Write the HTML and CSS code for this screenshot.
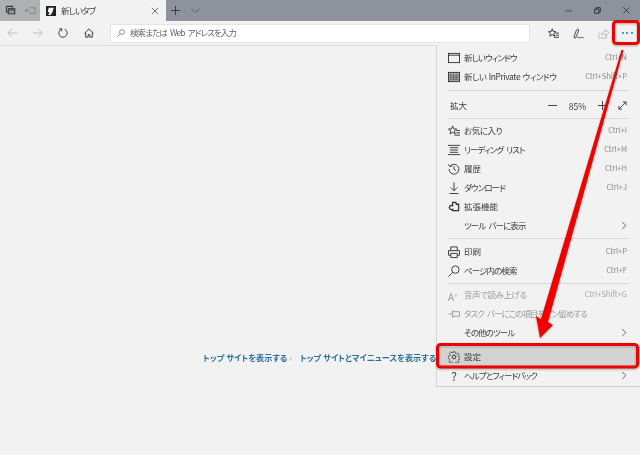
FILE: index.html
```html
<!DOCTYPE html>
<html lang="ja">
<head>
    <meta charset="UTF-8">
    <title>新しいタブ</title>
    <link rel="stylesheet" href="styles.css">
</head>
<body>
<div class="window">
    <!-- Title bar -->
    <div class="titlebar">
        <div class="tab-tools">
            <svg class="ico" viewBox="0 0 16 16"><path d="M2 2h9v2M2 2v8h2" fill="none" stroke="#333" stroke-width="1.5"/><rect x="4.500" y="5" width="10" height="8" fill="#555" stroke="#333"/><rect x="6" y="8" width="7" height="4" fill="#999"/></svg>
            <svg class="ico" viewBox="0 0 16 16"><path d="M6 4h9v8H6M6 8H0M3 5.500L.5 8 3 10.500" fill="none" stroke="#777" stroke-width="1"/></svg>
        </div>
        <div class="tab">
            <svg class="favicon" viewBox="0 0 11 11"><rect width="11" height="11" fill="#222"/><path d="M3 2h5.500L7 7 5 10H2.500L4 7 2 6.500z" fill="#fff"/></svg>
            <span class="tab-title">新しいタブ</span>
            <svg class="tab-close" viewBox="0 0 9 9"><path d="M1 1l7 7M8 1L1 8" stroke="#666" fill="none"/></svg>
        </div>
        <div class="tab-actions">
            <svg class="ico" viewBox="0 0 12 12"><path d="M6 0v12M0 6h12" stroke="#222" fill="none"/></svg>
            <svg class="ico" viewBox="0 0 12 12"><path d="M1 3.500l5 5 5-5" stroke="#4c5058" fill="none"/></svg>
        </div>
        <div class="win-buttons">
            <svg class="ico" viewBox="0 0 10 10"><path d="M0 5.500h10" stroke="#333" fill="none"/></svg>
            <svg class="ico" viewBox="0 0 10 10"><path d="M1 3h6v6H1zM3 3V1h6v6H7" stroke="#222" stroke-width="1.200" fill="none"/></svg>
            <svg class="ico" viewBox="0 0 10 10"><path d="M.5.500l9 9M9.500.500l-9 9" stroke="#222" fill="none"/></svg>
        </div>
    </div>

    <!-- Address bar -->
    <div class="toolbar">
        <div class="nav-buttons">
            <svg class="ico nav" viewBox="0 0 12 12"><path d="M12 6H1M6 1L1 6l5 5" stroke="#b5b5b5" fill="none"/></svg>
            <svg class="ico nav" viewBox="0 0 12 12"><path d="M0 6h11M6 1l5 5-5 5" stroke="#b5b5b5" fill="none"/></svg>
            <svg class="ico nav" viewBox="0 0 12 12"><path d="M4 1.500A5 5 0 1 0 8 1.500" stroke="#222" fill="none"/><path d="M1.500 1h3v3" stroke="#222" fill="none"/></svg>
            <svg class="ico nav" viewBox="0 0 12 12"><path d="M.5 6.500L6 1l5.500 5.500M2 5.500V11h3V8h2v3h3V5.500" stroke="#222" fill="none"/></svg>
        </div>
        <div class="address">
            <svg class="ico-small" viewBox="0 0 10 10"><circle cx="6.200" cy="3.800" r="3" stroke="#777" fill="none"/><path d="M4 6L.5 9.500" stroke="#777" fill="none"/></svg>
            <span class="address-text">検索または Web アドレスを入力</span>
        </div>
        <div class="tool-buttons">
            <svg class="ico" viewBox="0 0 13 13"><path d="M5 1l1.200 3.200 3.300.2-2.600 2 .9 3.300L5 7.900 2.200 9.700l.9-3.300-2.600-2 3.300-.2z" stroke="#222" fill="none"/><path d="M9 6h4M9 8.500h4M7 11h6" stroke="#222" fill="none"/></svg>
            <svg class="ico" viewBox="0 0 13 13"><path d="M1 11L4 2.500 6 1l.5 2.500L3 12zM5 11c2-1 2 1 3.500.5S10 11 12.500 11.500" stroke="#333" fill="none"/></svg>
            <svg class="ico" viewBox="0 0 13 13"><path d="M1 5v7h9V8M4 8c0-3 3-4 5-4V2l4 3.500L9 9V7C7 7 5 7 4 8z" stroke="#b5b5b5" fill="none"/></svg>
            <div class="more-button"><i></i><i></i><i></i></div>
        </div>
    </div>

    <!-- New tab page -->
    <div class="content">
        <div class="top-links">
            <a>トップ サイトを表示する<span class="link-arrow">›</span></a>
            <a>トップ サイトとマイニュースを表示する<span class="link-arrow">›</span></a>
        </div>
    </div>

    <!-- Settings menu -->
    <div class="menu">
        <div class="row"><svg class="ico" viewBox="0 0 13 13"><rect x=".5" y="1.500" width="12" height="10" fill="none" stroke="#333"/><path d="M0 3.500h13" stroke="#333"/></svg><span class="label tight">新しいウィンドウ</span><span class="key">Ctrl+N</span></div>
        <div class="row"><svg class="ico" viewBox="0 0 13 13"><rect x=".5" y="1.500" width="12" height="10" fill="#aaa" stroke="#333"/><path d="M2 5h9M2 7h9M2 9h9M3 3v7M6 3v7M9 3v7" stroke="#444" stroke-dasharray="1 1"/></svg><span class="label mixed">新しい InPrivate ウィンドウ</span><span class="key">Ctrl+Shift+P</span></div>
        <div class="sep sep-a"></div>
        <div class="row"><span class="label zoom-label">拡大</span>
            <span class="zoom-controls">
                <svg class="ico" viewBox="0 0 10 10"><path d="M0 5h10" stroke="#333"/></svg>
                <span>85%</span>
                <svg class="ico" viewBox="0 0 10 10"><path d="M0 5h10M5 0v10" stroke="#333"/></svg>
                <svg class="ico" viewBox="0 0 10 10"><path d="M1 9l8-8M5.500 1H9v3.500M1 5.500V9h3.500" stroke="#333" fill="none"/></svg>
            </span>
        </div>
        <div class="sep sep-b"></div>
        <div class="row"><svg class="ico" viewBox="0 0 13 13"><path d="M5 1l1.200 3.200 3.300.2-2.600 2 .9 3.300L5 7.900 2.200 9.700l.9-3.300-2.600-2 3.300-.2z" stroke="#333" fill="none"/><path d="M9 6h4M9 8.500h4M7 11h6" stroke="#333"/></svg><span class="label mixed">お気に入り</span><span class="key">Ctrl+I</span></div>
        <div class="row"><svg class="ico" viewBox="0 0 13 13"><path d="M0 1.500h13M2 4h9M2 6.500h9M2 9h9M0 11.500h13" stroke="#333" fill="none"/></svg><span class="label tight">リーディング リスト</span><span class="key">Ctrl+M</span></div>
        <div class="row"><svg class="ico" viewBox="0 0 13 13"><path d="M2.300 3.500A5.300 5.300 0 1 1 1.200 6.500M.5 1.500l1.500 2.300 2.500-.5M6.500 3.500v3.300l2.200 1.500" stroke="#333" fill="none"/></svg><span class="label">履歴</span><span class="key">Ctrl+H</span></div>
        <div class="row"><svg class="ico" viewBox="0 0 13 13"><path d="M6.500 .5v9M3 6l3.500 3.500L10 6M1.500 12.500h10" stroke="#333" fill="none"/></svg><span class="label tight">ダウンロード</span><span class="key">Ctrl+J</span></div>
        <div class="row"><svg class="ico" viewBox="0 0 13 13"><path d="M5 1.500h3.500l.5 2h2.500v7H5V9C3 10 1.500 8.500 1.500 7S3 4.500 5 5z" stroke="#333" stroke-width="1.400" fill="none"/></svg><span class="label">拡張機能</span></div>
        <div class="row"><span class="ico"></span><span class="label tight">ツール バーに表示</span><svg class="chevron" viewBox="0 0 6 10"><path d="M1 1l4 4-4 4" stroke="#555" fill="none"/></svg></div>
        <div class="sep sep-c"></div>
        <div class="row"><svg class="ico" viewBox="0 0 13 13"><path d="M3 5V1h7v4M3 10H.5V5h12v5H10M3 8h7v4.500H3z" stroke="#333" fill="none"/></svg><span class="label">印刷</span><span class="key">Ctrl+P</span></div>
        <div class="row"><svg class="ico" viewBox="0 0 13 13"><circle cx="8" cy="5" r="4" stroke="#333" fill="none"/><path d="M5 8l-4.500 4.500" stroke="#333"/></svg><span class="label tight">ページ内の検索</span><span class="key">Ctrl+F</span></div>
        <div class="sep sep-d"></div>
        <div class="row disabled"><span class="ico read-icon">A<sup>୬</sup></span><span class="label mixed">音声で読み上げる</span><span class="key">Ctrl+Shift+G</span></div>
        <div class="row disabled"><svg class="ico" viewBox="0 0 13 13"><path d="M5 4h7.500v5H5M5 2.500v8M5 6.500H.5" stroke="#999" fill="none"/></svg><span class="label tight">タスク バーにこの項目をピン留めする</span></div>
        <div class="row"><span class="ico"></span><span class="label tight">その他のツール</span><svg class="chevron" viewBox="0 0 6 10"><path d="M1 1l4 4-4 4" stroke="#555" fill="none"/></svg></div>
        <div class="row row-settings"><svg class="ico" viewBox="0 0 13 13"><circle cx="6.500" cy="6.500" r="2" stroke="#333" fill="none"/><path d="M5.500.8h2l.3 1.700 1.300.6 1.500-1 1.400 1.400-1 1.500.6 1.300 1.700.3v2l-1.700.3-.6 1.300 1 1.500-1.400 1.400-1.500-1-1.300.6-.3 1.700h-2l-.3-1.700-1.300-.6-1.500 1-1.400-1.400 1-1.500-.6-1.300L.2 7.500v-2l1.700-.3.600-1.300-1-1.500 1.400-1.400 1.500 1 1.300-.6z" stroke="#333" stroke-width=".8" fill="none"/></svg><span class="label">設定</span></div>
        <div class="row"><span class="ico help-icon">?</span><span class="label tight">ヘルプとフィードバック</span><svg class="chevron" viewBox="0 0 6 10"><path d="M1 1l4 4-4 4" stroke="#555" fill="none"/></svg></div>
    </div>

    <!-- Red annotations drawn over the screenshot -->
    <svg class="annotations" viewBox="0 0 640 455">
        <rect x="613.500" y="21.500" width="25" height="22" rx="3" fill="none" stroke="#f00000" stroke-width="3"/>
        <rect x="437.500" y="344.500" width="200" height="22.500" rx="3" fill="none" stroke="#f00000" stroke-width="3"/>
        <path d="M621.500 50L623.500 50 548 322 553 325 540 338 536 316 541 319z" fill="#f00000"/>
    </svg>
</div>
</body>
</html>
```

FILE: styles.css
```css
html, body {
    margin: 0;
    padding: 0;
}

body {
    font-family: "Noto Sans CJK JP", "Noto Sans", sans-serif;
    font-size: 8.5px;
    font-feature-settings: "palt";
    color: #3c3c3c;
    background-color: #f2f2f2;
}

.window {
    position: relative;
    width: 640px;
    height: 455px;
    overflow: hidden;
    display: flex;
    flex-direction: column;
    filter: blur(0.4px);
}

.ico {
    width: 12px;
    height: 12px;
    flex: none;
}

/* Title bar */
.titlebar {
    display: flex;
    align-items: center;
    height: 21px;
    background-color: #8d929c;
}

.tab-tools {
    display: flex;
    align-items: center;
    gap: 9px;
    width: 40px;
    height: 100%;
    box-sizing: border-box;
    padding-left: 5px;
    background-color: #aeb0b3;
}

.tab-tools .ico {
    width: 11px;
    height: 11px;
}

.tab {
    display: flex;
    align-items: center;
    width: 126px;
    height: 100%;
    box-sizing: border-box;
    padding: 0 7px 0 6px;
    background-color: #f2f2f2;
}

.favicon {
    width: 10px;
    height: 10px;
    margin-right: 5px;
}

.tab-title {
    flex: 1;
    margin-bottom: 2px;
    letter-spacing: -0.9px;
}

.tab-close {
    width: 8px;
    height: 8px;
}

.tab-actions {
    display: flex;
    align-items: center;
    gap: 11px;
    margin-left: 5px;
}

.tab-actions .ico {
    width: 9px;
    height: 9px;
}

.win-buttons {
    display: flex;
    align-items: center;
    gap: 22px;
    margin-left: auto;
    padding-right: 10px;
}

.win-buttons .ico {
    width: 7px;
    height: 7px;
}

/* Address bar */
.toolbar {
    display: flex;
    align-items: center;
    height: 24px;
    background-color: #f2f2f2;
    border-bottom: 1px solid #dcdcdc;
}

.nav-buttons {
    display: flex;
    align-items: center;
    gap: 15.5px;
    width: 110px;
    box-sizing: border-box;
    padding-left: 7px;
}

.nav-buttons .nav {
    width: 10px;
    height: 10px;
}

.address {
    display: flex;
    align-items: center;
    gap: 5px;
    width: 420px;
    height: 19px;
    box-sizing: border-box;
    padding-left: 6px;
    background-color: #fff;
    border: 1px solid #e4e4e4;
    color: #666;
}

.address-text {
    margin-bottom: 2px;
    letter-spacing: -0.9px;
    word-spacing: 2px;
}

.ico-small {
    width: 8px;
    height: 8px;
}

.tool-buttons {
    display: flex;
    align-items: center;
    gap: 14px;
    margin-left: 18px;
}

.tool-buttons .ico {
    width: 11px;
    height: 11px;
}

.more-button {
    display: flex;
    justify-content: center;
    align-items: center;
    gap: 2.5px;
    width: 22px;
    height: 20px;
    margin-left: -7px;
}

.more-button i {
    width: 2px;
    height: 2px;
    border-radius: 50%;
    background-color: #1a78c8;
}

/* New tab page */
.content {
    flex: 1;
    background-color: #f2f2f2;
}

.top-links {
    display: flex;
    gap: 8px;
    padding: 306px 0 0 203px;
}

.top-links a {
    color: #2b6f9f;
    font-size: 8.2px;
    font-weight: 700;
    line-height: 11px;
    white-space: nowrap;
}

.link-arrow {
    margin-left: 2px;
    color: #999;
    font-weight: 400;
}

/* Settings menu */
.menu {
    position: absolute;
    top: 45px;
    left: 436px;
    width: 204px;
    height: 342px;
    box-sizing: border-box;
    padding: 3px 0 0;
    background-color: #f2f2f2;
    border: 1px solid #d6d6d6;
    border-top: 0;
    border-right: 0;
    border-bottom: 1px solid #d0d0d0;
}

.row {
    display: flex;
    align-items: center;
    height: 19px;
    padding: 0 13px 0 11px;
    white-space: nowrap;
    box-sizing: border-box;
}

.label {
    margin-left: 4px;
    margin-bottom: 2px;
    flex: 1;
}

/* kana set in this font runs wider than in the original UI font */
.tight {
    letter-spacing: -0.9px;
    word-spacing: 2px;
}

.mixed {
    letter-spacing: -0.45px;
    word-spacing: 1px;
}

.zoom-label {
    margin-left: 0;
    padding-left: 2px;
}

.key {
    margin-bottom: 2px;
    font-size: 7.5px;
    color: #8a8a8a;
}

.chevron {
    width: 6px;
    height: 9px;
}

.sep {
    height: 1px;
    margin: 3px 11px;
    background-color: #d8d8d8;
}

.sep-a {
    margin-top: 4px;
    margin-bottom: 5px;
}

.sep-b {
    margin-bottom: 2px;
}

.sep-d {
    margin-bottom: 1px;
}

.zoom-controls {
    display: flex;
    align-items: center;
    gap: 11.5px;
}

.zoom-controls .ico {
    width: 9px;
    height: 9px;
}

.disabled {
    color: #9a9a9a;
}

.disabled .key {
    color: #a5a5a5;
}

.read-icon {
    font-size: 10px;
    line-height: 12px;
}

.read-icon sup {
    font-size: 5px;
}

.help-icon {
    font-size: 12px;
    line-height: 12px;
    text-align: center;
}

.row-settings {
    margin: 5px 1px 0;
    padding: 0 12px 0 10px;
    background-color: #d3d3d1;
}

.annotations {
    position: absolute;
    top: 0;
    left: 0;
    width: 640px;
    height: 455px;
    pointer-events: none;
    filter: drop-shadow(0 1px 1px rgba(0, 0, 0, 0.3));
}
```
